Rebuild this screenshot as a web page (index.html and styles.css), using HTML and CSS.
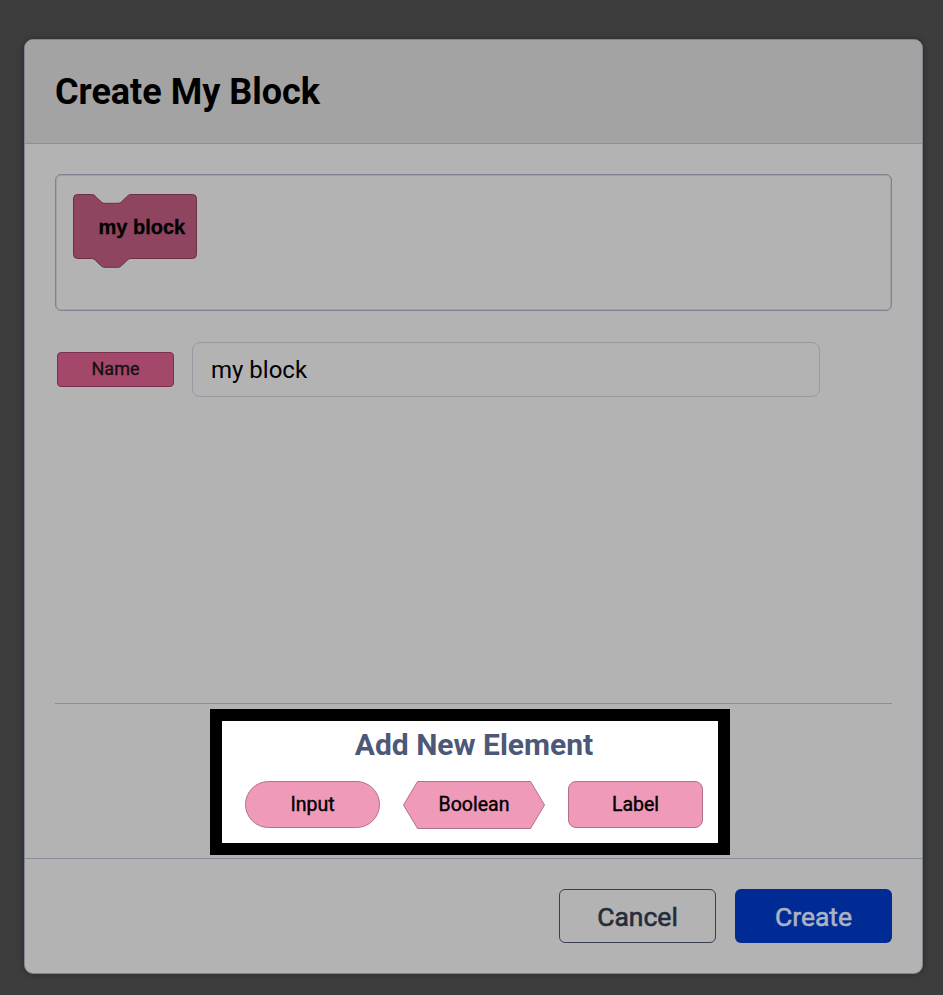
FILE: index.html
```html
<!DOCTYPE html>
<html>
<head>
<meta charset="utf-8">
<link rel="stylesheet" href="styles.css">
</head>
<body>
<div class="modal">
  <div class="modal-header">
    <h1 class="title">Create My Block</h1>
  </div>
  <div class="modal-body">
    <div class="preview">
      <svg class="block" width="125" height="75" viewBox="-0.5 -0.5 125 75">
        <path d="M0,4 A4,4 0 0 1 4,0 H18 c2.2,0 3.3,1.1 4.4,2.2 l4.4,4.4 c1.1,1.1 2.2,2.2 4.4,2.2 h13.2 c2.2,0 3.3,-1.1 4.4,-2.2 l4.4,-4.4 c1.1,-1.1 2.2,-2.2 4.4,-2.2 H119 a4,4 0 0 1 4,4 V60 a4,4 0 0 1 -4,4 H57.6 c-2.2,0 -3.3,1.1 -4.4,2.2 l-4.4,4.4 c-1.1,1.1 -2.2,2.2 -4.4,2.2 h-13.2 c-2.2,0 -3.3,-1.1 -4.4,-2.2 l-4.4,-4.4 c-1.1,-1.1 -2.2,-2.2 -4.4,-2.2 H4 a4,4 0 0 1 -4,-4 Z" fill="#8f4560" stroke="#6c2d46" stroke-width="1"/>
        <text x="25" y="39" class="block-text">my block</text>
      </svg>
    </div>
    <div class="name-row">
      <div class="name-label">Name</div>
      <div class="name-input">my block</div>
    </div>
    <div class="spacer"></div>
    <div class="divider"></div>
    <div class="spot-wrap">
      <div class="spotlight">
        <div class="spot-title">Add New Element</div>
        <div class="spot-buttons">
          <div class="el-btn pill">Input</div>
          <div class="el-btn hex">
            <svg class="hex-bg" width="143" height="48" viewBox="0 0 143 48">
              <polygon points="0.5,24 14.5,0.5 127.5,0.5 141.5,24 127.5,47.5 14.5,47.5" fill="#f09aba" stroke="#b0708c" stroke-width="1"/>
            </svg>
            <span class="hex-text">Boolean</span>
          </div>
          <div class="el-btn rect">Label</div>
        </div>
      </div>
    </div>
  </div>
  <div class="modal-footer">
    <div class="btn cancel">Cancel</div>
    <div class="btn create">Create</div>
  </div>
</div>
</body>
</html>
```
FILE: styles.css
```css
html, body {
  margin: 0;
  padding: 0;
  background: #3d3d3d;
  font-family: Roboto, "Liberation Sans", sans-serif;
}
body {
  height: 995px;
  overflow: hidden;
}
.modal {
  margin: 39px 0 0 24px;
  width: 897px;
  height: 933px;
  border: 1px solid #7f8591;
  border-radius: 9px;
  background: #b3b3b3;
  overflow: hidden;
  box-shadow: 0 0 6px rgba(0,0,0,0.35);
  display: flex;
  flex-direction: column;
}
.modal-header {
  height: 103px;
  background: #a3a3a3;
  border-bottom: 1px solid #8a909b;
  display: flex;
  align-items: center;
  padding-left: 30px;
  flex-shrink: 0;
}
.title {
  margin: 0;
  font-size: 36px;
  font-weight: 700;
  color: #000;
  letter-spacing: 0;
}
.modal-body {
  flex: 1;
  padding: 30px 30px 0 30px;
  display: flex;
  flex-direction: column;
}
.preview {
  border: 1px solid #7f8390;
  box-shadow: inset 0 0 0 0.5px #8c909c;
  border-radius: 6px;
  padding: 19px 17px 0;
  box-sizing: border-box;
  height: 137px;
}
.block { display: block; }
.block-text {
  font-family: "Liberation Sans", Arial, sans-serif;
  font-weight: 700;
  font-size: 20px;
  fill: #000;
  stroke: #000;
  stroke-width: 0.3px;
}
.name-row {
  margin-top: 31px;
  display: flex;
  align-items: center;
}
.name-label {
  margin-left: 2px;
  width: 115px;
  background: #a3486a;
  border: 1px solid #7a304e;
  border-radius: 4px;
  display: flex;
  align-items: center;
  justify-content: center;
  font-size: 18px;
  font-weight: 400;
  -webkit-text-stroke: 0.3px #111;
  color: #111;
  padding-bottom: 2px;
  box-sizing: content-box;
  height: 31px;
}
.name-input {
  margin-left: 18px;
  width: 608px;
  height: 53px;
  border: 1px solid #959aa3;
  border-radius: 8px;
  display: flex;
  align-items: center;
  padding-left: 18px;
  font-size: 24px;
  color: #000;
}
.spacer { flex: 1; }
.divider {
  height: 1px;
  background: #878ea0;
}
.spot-wrap {
  padding: 5px 0 3px 155px;
  display: flex;
}
.spotlight {
  width: 496px;
  height: 122px;
  border: 12px solid #000;
  background: #fff;
  display: flex;
  flex-direction: column;
  align-items: center;
}
.spot-title {
  margin-top: 6px;
  font-size: 30px;
  font-weight: 700;
  color: #4d5878;
  line-height: 36px;
  padding-left: 8px;
}
.spot-buttons {
  margin-top: 18px;
  display: flex;
  gap: 23px;
  padding-left: 8px;
}
.el-btn {
  width: 135px;
  height: 47px;
  box-sizing: border-box;
  display: flex;
  align-items: center;
  justify-content: center;
  font-size: 19.5px;
  font-weight: 400;
  -webkit-text-stroke: 0.4px #000;
  color: #000;
}
.pill {
  background: #f09aba;
  border: 1px solid #b0708c;
  border-radius: 24px;
}
.rect {
  background: #f09aba;
  border: 1px solid #b0708c;
  border-radius: 8px;
}
.hex {
  width: 142px;
  height: 47px;
  position: relative;
}
.hex-bg {
  position: absolute;
  left: 0;
  top: 0;
}
.hex-text { position: relative; }
.modal-footer {
  height: 115px;
  border-top: 1px solid #858c99;
  display: flex;
  justify-content: flex-end;
  align-items: flex-start;
  padding: 30px 30px 0 0;
  box-sizing: border-box;
  gap: 19px;
  flex-shrink: 0;
}
.btn {
  width: 157px;
  height: 54px;
  box-sizing: border-box;
  border-radius: 6px;
  display: flex;
  align-items: center;
  justify-content: center;
  font-size: 26.5px;
  font-weight: 400;
}
.cancel {
  border: 1px solid #3a4250;
  color: #262d3a;
  -webkit-text-stroke: 0.6px #262d3a;
}
.create {
  background: #002a94;
  color: #abb2c2;
  -webkit-text-stroke: 0.6px #abb2c2;
}
```
